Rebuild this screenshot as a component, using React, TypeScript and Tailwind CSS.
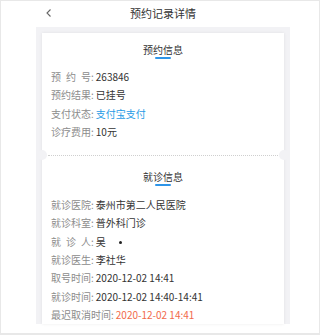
import React from 'react';

type Row = { label: string; value: string; spaced?: boolean; tone?: 'blue' | 'red'; mark?: boolean };

const bookingRows: Row[] = [
  { label: '预约号', value: '263846', spaced: true },
  { label: '预约结果', value: '已挂号' },
  { label: '支付状态', value: '支付宝支付', tone: 'blue' },
  { label: '诊疗费用', value: '10元' },
];

const visitRows: Row[] = [
  { label: '就诊医院', value: '泰州市第二人民医院' },
  { label: '就诊科室', value: '普外科门诊' },
  { label: '就诊人', value: '吴', spaced: true, mark: true },
  { label: '就诊医生', value: '李社华' },
  { label: '取号时间', value: '2020-12-02 14:41' },
  { label: '就诊时间', value: '2020-12-02 14:40-14:41' },
  { label: '最迟取消时间', value: '2020-12-02 14:41', tone: 'red' },
];

const InfoRow = ({ row }: { row: Row }) => (
  <div className="flex items-center h-[18.33px] text-[10px] leading-[12px]">
    {row.spaced ? (
      <span className="flex justify-between w-[40px] text-[#8c8c8c]">
        {row.label.split('').map((c) => (
          <span key={c}>{c}</span>
        ))}
      </span>
    ) : (
      <span className="text-[#8c8c8c]">{row.label}</span>
    )}
    <span className="text-[#8c8c8c] mr-[2px]">:</span>
    <span
      className={
        row.tone === 'blue'
          ? 'text-[#1f9be6]'
          : row.tone === 'red'
            ? 'text-[#f26a4b]'
            : 'text-[#333333]'
      }
    >
      {row.value}
    </span>
    {row.mark && <span className="ml-[13px] mt-[2px] w-[3px] h-[3px] rounded-full bg-[#222]" />}
  </div>
);

const SectionTitle = ({ title }: { title: string }) => (
  <div className="flex flex-col items-center">
    <span className="text-[10px] leading-[12px] text-[#333333]">{title}</span>
    <span className="mt-[1px] w-[16px] h-[1.5px] rounded-full bg-[#2f95e8]" />
  </div>
);

export default function App() {
  return (
    <div
      className="w-[320px] h-[335px] bg-white border border-[#e8e8e8] border-b-2 overflow-hidden"
      style={{ fontFamily: '"Noto Sans CJK SC", "Noto Sans", sans-serif' }}
    >
      <div className="ml-[35px] w-[254px]">
        <header className="relative h-[26px] flex items-center justify-center">
          <svg
            className="absolute left-[9px] top-[7px] w-[8px] h-[10px]"
            viewBox="0 0 8 10"
            fill="none"
            stroke="#666"
            strokeWidth="1.1"
          >
            <path d="M5.5 1.5 L2 5 L5.5 8.5" />
          </svg>
          <span className="text-[11px] leading-[14px] text-[#333333] -mt-[2px]">预约记录详情</span>
        </header>

        <div className="bg-[#f2f2f5] px-[6px] pt-[6px] h-[297px]">
          <div className="relative bg-white h-[291px] shadow-[0_0_3px_rgba(0,0,0,0.08)]">
            <div className="pt-[11px] pb-[14px] px-[9px]">
              <SectionTitle title="预约信息" />
              <div className="mt-[9.5px]">
                {bookingRows.map((r) => (
                  <InfoRow key={r.label} row={r} />
                ))}
              </div>
            </div>

            <div className="relative h-0">
              <span className="absolute -left-[5px] -top-[5px] w-[10px] h-[10px] rounded-full bg-[#f2f2f5]" />
              <div className="mx-[6px] border-t border-dotted border-[#cfcfcf]" />
              <span className="absolute -right-[5px] -top-[5px] w-[10px] h-[10px] rounded-full bg-[#f2f2f5]" />
            </div>

            <div className="pt-[16px] px-[9px]">
              <SectionTitle title="就诊信息" />
              <div className="mt-[10px]">
                {visitRows.map((r) => (
                  <InfoRow key={r.label} row={r} />
                ))}
              </div>
            </div>
          </div>
        </div>
      </div>
    </div>
  );
}
